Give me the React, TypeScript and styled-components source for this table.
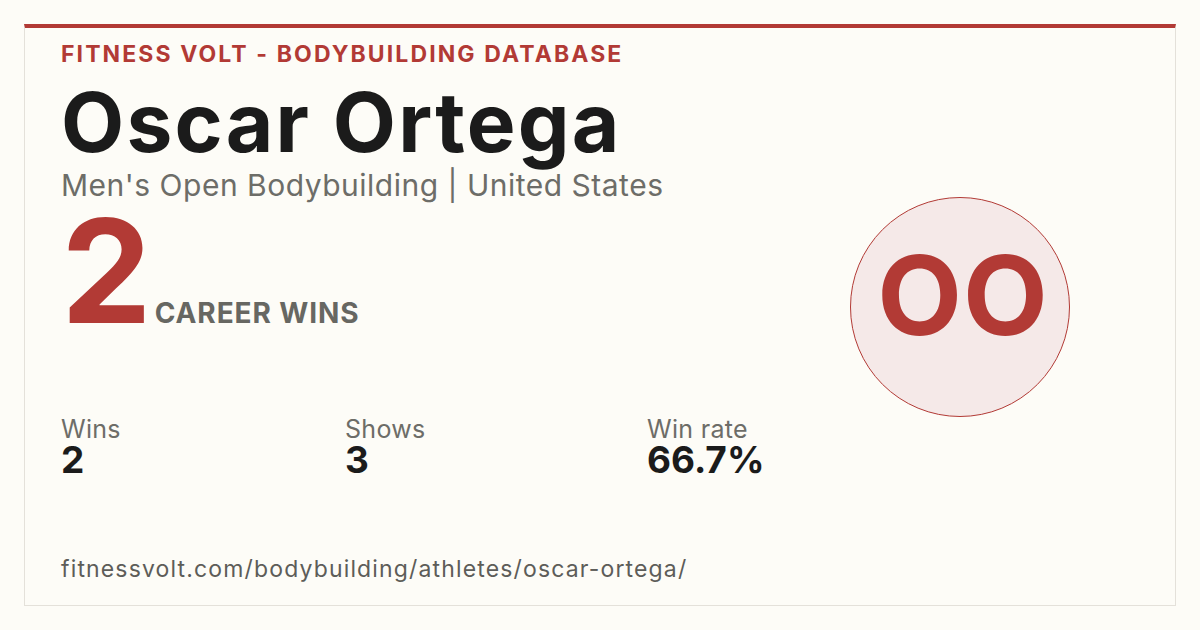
import styled, { createGlobalStyle } from "styled-components";

const GlobalStyle = createGlobalStyle`
  html, body {
    margin: 0;
    padding: 0;
    background: #fdfcf7;
  }
  body {
    font-family: Inter, "Noto Sans", sans-serif;
  }
`;

const Page = styled.div`
  width: 1200px;
  height: 630px;
  padding: 24px;
  box-sizing: border-box;
  background: #fdfcf7;
`;

const Card = styled.div`
  height: 100%;
  box-sizing: border-box;
  border: 1px solid #e4e1da;
  border-top: 4px solid #b23a35;
  display: flex;
`;

const Main = styled.div`
  flex: 1;
  display: flex;
  flex-direction: column;
  padding: 12px 0 22px 36px;
`;

const Kicker = styled.div`
  font-size: 23px;
  line-height: 28px;
  font-weight: 700;
  letter-spacing: 2.1px;
  color: #b23a35;
  text-transform: uppercase;
`;

const Name = styled.h1`
  margin: 14px 0 0;
  font-size: 82px;
  line-height: 82px;
  font-weight: 700;
  letter-spacing: 2.2px;
  color: #1b1b1b;
`;

const Sub = styled.div`
  margin-top: 3px;
  font-size: 30px;
  line-height: 36px;
  letter-spacing: 0.5px;
  color: #6d6d68;
`;

const Hero = styled.div`
  display: flex;
  align-items: baseline;
  gap: 6px;
  margin-top: 13px;
`;

const BigNum = styled.span`
  font-size: 144px;
  line-height: 110px;
  font-weight: 700;
  color: #b23a35;
  letter-spacing: -3px;
`;

const HeroLabel = styled.span`
  font-size: 28px;
  line-height: 28px;
  font-weight: 700;
  color: #676762;
  letter-spacing: 0.9px;
`;

const Stats = styled.div`
  display: grid;
  grid-template-columns: 284px 302px auto;
  margin-top: 89px;
`;

const Stat = styled.div`
  display: flex;
  flex-direction: column;
`;

const StatLabel = styled.div`
  font-size: 25px;
  line-height: 26px;
  color: #6d6d68;
  letter-spacing: 0.3px;
`;

const StatValue = styled.div`
  font-size: 37px;
  line-height: 36px;
  font-weight: 700;
  color: #1b1b1b;
`;

const Url = styled.div`
  margin-top: auto;
  font-size: 23px;
  line-height: 28px;
  color: #5d5d59;
  letter-spacing: 1.15px;
`;

const Aside = styled.div`
  display: flex;
  align-items: center;
  padding: 0 105px 20px 0;
`;

const Avatar = styled.div`
  width: 220px;
  height: 220px;
  box-sizing: border-box;
  border-radius: 50%;
  border: 1.5px solid #b23a35;
  background: #f5e9e8;
  display: flex;
  align-items: center;
  justify-content: center;
  padding: 0 0 24px 6px;
  font-size: 110px;
  font-weight: 700;
  color: #b23a35;
  letter-spacing: 1px;
`;

const stats = [
  { label: "Wins", value: "2" },
  { label: "Shows", value: "3" },
  { label: "Win rate", value: "66.7%" },
];

export default function App() {
  return (
    <>
      <GlobalStyle />
      <Page>
        <Card>
          <Main>
            <Kicker>Fitness Volt - Bodybuilding Database</Kicker>
            <Name>Oscar Ortega</Name>
            <Sub>Men's Open Bodybuilding | United States</Sub>
            <Hero>
              <BigNum>2</BigNum>
              <HeroLabel>CAREER WINS</HeroLabel>
            </Hero>
            <Stats>
              {stats.map((s) => (
                <Stat key={s.label}>
                  <StatLabel>{s.label}</StatLabel>
                  <StatValue>{s.value}</StatValue>
                </Stat>
              ))}
            </Stats>
            <Url>fitnessvolt.com/bodybuilding/athletes/oscar-ortega/</Url>
          </Main>
          <Aside>
            <Avatar>OO</Avatar>
          </Aside>
        </Card>
      </Page>
    </>
  );
}
